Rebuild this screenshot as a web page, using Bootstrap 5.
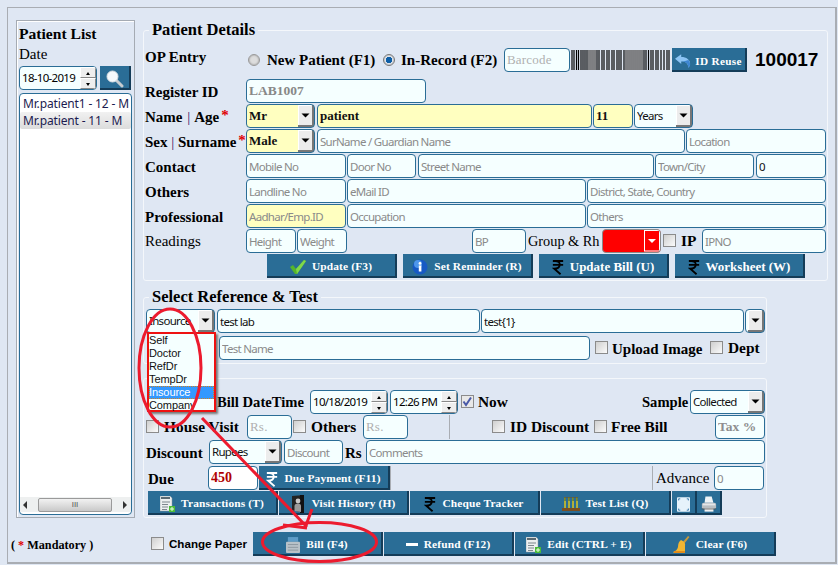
<!DOCTYPE html>
<html lang="en"><head><meta charset="utf-8"><title>Patient Details</title>
<link href="https://cdn.jsdelivr.net/npm/bootstrap@5.3.0/dist/css/bootstrap.min.css" rel="stylesheet">
<style>
html,body{margin:0;height:565px;overflow:hidden;background:#dfe7f3}
body{font-family:"Liberation Serif",serif;color:#000;position:relative}
.frame{margin:7px 0 0 7px;width:830px;height:557px;border:1px solid #a9adb3;border-right-width:2px;border-bottom-width:2px}
.leftpanel{width:119px;height:498px;margin:12px 0 0 8px;border:1px solid #a5abb3;box-shadow:inset 1px 1px 0 #fff;padding:3px 2px 2px}
.ptitle{font-weight:700;font-size:15.6px;line-height:20px}
.ptext{font-size:15px;line-height:20px;margin-bottom:2px}
.rightcol{margin:13px 0 0 8px}
.fset{border:1px solid #f4f7fb;border-radius:3px;padding:0 1px}
.fset legend{float:none;width:auto;font-size:16.5px;line-height:18px;font-weight:700;padding:0 3px;margin:0 0 0 4px}
.fs1{width:685px;padding-top:9px;padding-bottom:2px}
.fs2{width:624px;margin-top:7px;padding-top:3px;padding-bottom:3px}
.fs3{width:624px;margin-top:14px;padding-top:11px;padding-bottom:2px}
.frow{display:flex;align-items:flex-start;height:25px;white-space:nowrap}
.frow.oprow{height:24px;margin-bottom:7px;align-items:center}
.frow.auto{height:24px}
.lb{font-size:15px;line-height:26px;font-weight:700;flex:none}
.lb.lh24{line-height:24px;font-size:15.4px}
.lb.reg{font-weight:400;line-height:24px}
.lb.sm{font-size:14.6px;line-height:24px}
.lb.narrow{font-size:14.3px}
.lbl{width:101px}
.star{color:#e00000;font-size:15px;position:relative;top:-2px;font-weight:700;margin-left:2px}
.pipe{color:#3a1060;font-weight:400}
.pipe.wide{margin:0 1px}
.opl{line-height:24px;margin-bottom:6px}
.fc.form-control,.fc.form-select{height:24px;min-height:0;flex:none;padding:0 2px;font-family:"Noto Sans",sans-serif;font-size:11.5px;letter-spacing:-.7px;line-height:22px;color:#111;background-color:#f5ffff;border:1px solid #2a6d96;border-radius:4px;box-shadow:none}
.fc.form-control::placeholder{color:#8a8a8a;opacity:1}
.fc.form-select{padding-right:16px;background-image:url("data:image/svg+xml,%3Csvg xmlns='http://www.w3.org/2000/svg' width='16' height='22'%3E%3Crect width='16' height='22' fill='%23ececec'/%3E%3Cpath d='M0 .5H16M.5 0V22' stroke='%23fff'/%3E%3Cpath d='M15 0V22M0 21H16' stroke='%23777' stroke-width='2'/%3E%3Cpath d='M3.5 8.5H11.5L7.5 12.5Z' fill='%23000'/%3E%3C/svg%3E");background-position:right 0 center;background-size:16px 22px;background-repeat:no-repeat}
.fc.yel{background-color:#ffffc0}
.fc.bs{font-family:"Liberation Serif",serif;font-weight:700;font-size:13px;letter-spacing:0}
.fc.gr{color:#888}
.fc.serifph{font-family:"Liberation Serif",serif;font-size:13px;letter-spacing:.2px}
.fc.serifph::placeholder{color:#b0b0b0}
.fc.serifb::placeholder{font-weight:700;color:#8e8e8e}
.fc.serifb{font-family:"Liberation Serif",serif;font-size:13.5px;letter-spacing:0}
.fc.boldv{font-weight:700}
.fc.red{color:#b00000;font-family:"Liberation Serif",serif;font-weight:700;font-size:14px;letter-spacing:0;background-color:#fff}
.fc.redsel{background-color:#ff0000;border-color:#8a8a8a;background-image:url("data:image/svg+xml,%3Csvg xmlns='http://www.w3.org/2000/svg' width='16' height='22'%3E%3Crect width='16' height='22' fill='%23f00'/%3E%3Cpath d='M.5 .5H15.5V21' stroke='%23fff' fill='none'/%3E%3Cpath d='M.5 0V21M0 21H16' stroke='%23fff'/%3E%3Cpath d='M4 9H12L8 13Z' fill='%23fff'/%3E%3C/svg%3E")}
.spinbox{display:flex;height:24px;flex:none;background:#f5ffff;border:1px solid #2a6d96;border-radius:4px;overflow:hidden}
.spinbox input{flex:1;min-width:0;border:0;background:transparent;padding:0 2px;font-family:"Noto Sans",sans-serif;font-size:11.5px;letter-spacing:-.7px;outline:0}
.spins{width:16px;flex:none;display:flex;flex-direction:column}
.spins span{flex:1;background:#eeeeee;border:1px solid;border-color:#fff #888 #888 #fff;position:relative}
.spins span::after{content:"";position:absolute;left:5px;top:4px;border:2px solid transparent;border-top:0;border-bottom:3px solid #000}
.spins span+span::after{border-bottom:0;border-top:3px solid #000}
.form-check-input.ck{width:13px;height:13px;margin:5px 0 0;flex:none;border-radius:0;border:1px solid #8b8b8b;background-color:#e4e4e4;background-image:linear-gradient(135deg,#cfcfcf,#fbfbfb);box-shadow:none}
.form-check-input.ck.on{background-image:url("data:image/svg+xml,%3Csvg xmlns='http://www.w3.org/2000/svg' viewBox='0 0 13 13'%3E%3Cpath d='M2.5 6.5L5 10L10 2.5' stroke='%234a5aa8' stroke-width='2' fill='none'/%3E%3C/svg%3E");background-color:#e8e8e8;background-size:13px}
.form-check-input.rd{width:12px;height:12px;margin:0;flex:none;border:1px solid #999;background-color:#ddd;background-image:none;box-shadow:inset 0 0 2px #888}
.form-check-input.rd.on{background-color:#e8eef5;background-image:radial-gradient(circle,#0d5fa8 0 3px,#e8eef5 3.5px);border-color:#777}
.bbtn.btn{flex:none;display:flex;align-items:center;justify-content:center;gap:6px;height:24px;width:130px;padding:4px 0 0;background:#2a6d96;border:0;border-right:2px solid #143c58;border-bottom:2px solid #143c58;border-radius:0;color:#fff;font-family:"Liberation Serif",serif;font-weight:700;font-size:11.4px;letter-spacing:.15px;white-space:nowrap}
.bbtn.big{font-size:13px;letter-spacing:0}
.bbtn.ic{width:25px}
.bbtn.wd131{width:131px}
.bbtn.wd75{width:75px;gap:4px;font-size:11.2px;letter-spacing:.35px}
.bbtn.wd31{width:31px}
.bid{font-family:"Liberation Sans",sans-serif;font-weight:700;font-size:19px;line-height:24px}
.sepv{width:1px;height:24px;flex:none;background:#a9adb3}
.plist{flex:1;height:422px;background:#fff;border:1px solid #2a6d96;border-radius:4px;margin-top:3px;display:flex;flex-direction:column;overflow:hidden}
.pitems{flex:1;padding-top:1px}
.pitems .list-group-item{background:transparent;border:0;border-radius:0;padding:0 0 0 3px;height:17px;font-family:"Noto Sans",sans-serif;font-size:12px;letter-spacing:-.15px;line-height:17px;color:#1c1c50;white-space:nowrap}
.pitems .list-group-item.sel{background:linear-gradient(#f1f1f1,#dcdcdc);border-radius:2px}
.hscroll{height:15px;margin-bottom:2px;display:flex;align-items:center;background:#eef0f0;padding:0 3px}
.hscroll .tri{width:0;height:0;border:4px solid transparent;flex:none}
.tl{border-right:4px solid #333!important;border-left:0!important}
.tr{border-left:4px solid #333!important;border-right:0!important}
.thumb{width:74px;height:14px;margin:0 11px 0 11px;flex:none;background:linear-gradient(#f2f2f2,#c9c9c9);border:1px solid #9a9a9a;border-radius:2px;font-size:8px;line-height:11px;text-align:center;color:#555;font-family:"Liberation Sans",sans-serif}
.relw{position:relative;flex:none}
.dropdown-menu.ddm{display:block;position:absolute;top:23px;left:1px;min-width:0;width:69px;height:80px;padding:0;margin:0;background:#f5ffff;border:2px solid #ee1111;border-radius:0;box-shadow:2px 2px 2px #777;z-index:5}
.ddm .dropdown-item{padding:0;height:13px;font-family:"Liberation Sans",sans-serif;font-size:11px;letter-spacing:-.1px;line-height:13px;color:#111;overflow:hidden}
.ddm .dropdown-item.active{background:#3399ff;color:#fff;outline:1px dotted #d08020;outline-offset:-1px}
.mand{font-size:12.2px;font-weight:700;line-height:26px;width:140px;flex:none}
.mand b{color:#e00000}
.chg{font-family:"Liberation Sans",sans-serif;font-weight:700;font-size:11.6px;line-height:24px}
.botrow{margin-top:14px}
.overlay{position:absolute;left:0;top:0;width:838px;height:565px;pointer-events:none;z-index:20}
.wd13{width:13px}.wd20{width:20px}.wd21{width:21px}.wd40{width:40px}.wd45{width:45px}.wd48{width:48px}.wd50{width:50px}.wd52{width:52px}.wd54{width:54px}.wd58{width:58px}.wd59{width:59px}.wd60{width:60px}.wd63{width:63px}.wd66{width:66px}.wd68{width:68px}.wd69{width:69px}.wd70{width:70px}.wd73{width:73px}.wd74{width:74px}.wd75{width:75px}.wd78{width:78px}.wd83{width:83px}.wd84{width:84px}.wd93{width:93px}.wd98{width:98px}.wd99{width:99px}.wd100{width:100px}.wd104{width:104px}.wd116{width:116px}.wd103{width:103px}.wd124{width:124px}.wd140{width:140px}.wd164{width:164px}.wd180{width:180px}.wd236{width:236px}.wd239{width:239px}.wd263{width:263px}.wd275{width:275px}.wd368{width:368px}.wd371{width:371px}.wd399{width:399px}
.ml1{margin-left:1px!important}.ml2{margin-left:2px!important}.ml3{margin-left:3px!important}.ml4{margin-left:4px!important}.ml5{margin-left:5px!important}.ml6{margin-left:6px!important}.ml7{margin-left:7px!important}.ml8{margin-left:8px!important}.ml41{margin-left:41px!important}.ml42{margin-left:42px!important}.ml72{margin-left:72px!important}.ml74{margin-left:74px!important}.ml122{margin-left:122px!important}.ml125{margin-left:125px!important}.ml261{margin-left:261px!important}
.mt1r{margin-top:1px}.mt3r{margin-top:3px}
</style></head>
<body>
<svg width="0" height="0" class="position-absolute">
<defs>
<symbol id="rup" viewBox="0 0 14 18"><path d="M1 2H13M1 6.5H13M4 2C11 2 11 11 2.5 11L10 17.5" fill="none" stroke="currentColor" stroke-width="2.1"/></symbol>
<symbol id="chk" viewBox="0 0 16 14"><path d="M0 7L3 5L6 9L14 0L16 1L7 14H5Z" fill="#55b52a"/><path d="M6 9L14 0L16 1L7 14Z" fill="#7fd84a"/></symbol>
<symbol id="inf" viewBox="0 0 16 16"><circle cx="8" cy="8" r="7.5" fill="#1659c4"/><circle cx="6" cy="5" r="4" fill="#4d96ec"/><rect x="6.8" y="6.5" width="2.6" height="6" fill="#fff"/><circle cx="8" cy="4.4" r="1.4" fill="#fff"/></symbol>
<symbol id="doc" viewBox="0 0 15 17"><path d="M0 0H10L12 2V15H0Z" fill="#eceff0" stroke="#8f9aa0" stroke-width=".5"/><path d="M1 1H10V3H1Z" fill="#5b6a72"/><path d="M2 6H10M2 8.5H8M2 11H8M2 13.5H7" stroke="#7d878d"/><rect x="9" y="10" width="6" height="6" fill="#4cbb3a"/><path d="M12 11V15M10 13H14" stroke="#e7ffe0"/></symbol>
<symbol id="door" viewBox="0 0 15 18"><path d="M1 1L13 0V18L1 15Z" fill="#222"/><path d="M9 0H13V18H9Z" fill="#111"/><circle cx="7" cy="6" r="2.4" fill="#c8c8c8"/><path d="M3.5 16V11Q3.5 8.5 7 8.5Q10 8.5 10 11V17Z" fill="#9a9a9a"/></symbol>
<symbol id="tube" viewBox="0 0 18 14"><path d="M2 0H3.6V11H2ZM6 0H7.6V11H6ZM10 0H11.6V11H10ZM14 0H15.6V11H14Z" fill="#7f8a26"/><path d="M2 0H16" stroke="#6b4a2a"/><path d="M2.5 4H3.6V11H2.5ZM6.5 4H7.6V11H6.5ZM10.5 4H11.6V11H10.5ZM14.5 4H15.6V11H14.5Z" fill="#e6d43c"/><rect y="11" width="18" height="3" fill="#7a4f22"/></symbol>
<symbol id="full" viewBox="0 0 16 18"><rect width="16" height="18" rx="1" fill="#e6f2fb"/><path d="M2 2H4M2 2V4M14 2H12M14 2V4M2 16H4M2 16V14M14 16H12M14 16V14" stroke="#3f7fb0" stroke-width="1.2"/></symbol>
<symbol id="prn" viewBox="0 0 18 18"><path d="M5 0H12L14 7H4Z" fill="#eef3f6"/><rect x="1" y="7" width="16" height="7" rx="2" fill="#b9bec2"/><rect x="2" y="8" width="14" height="2" fill="#e4e6e8"/><rect x="4" y="13" width="10" height="4" fill="#f2f2f2"/><path d="M1 14H17" stroke="#555"/></symbol>
<symbol id="bill" viewBox="0 0 15 17"><path d="M2 0H13V5H2Z" fill="#5d9cc8"/><rect y="5" width="15" height="12" rx="1" fill="#b8c2c8"/><path d="M2 8H13M2 11H13M2 14H13" stroke="#8b979e"/></symbol>
<symbol id="brm" viewBox="0 0 17 18"><path d="M15 0L16.5 1L11 8L9 7Z" fill="#c99a3a"/><path d="M8 4Q13 6 12 10L12 17H3Q0 17 0 16Q4 15 5 11Q5 6 8 4Z" fill="#f2b632"/><path d="M1 16H12" stroke="#e08c1c" stroke-width="2"/></symbol>
<symbol id="back" viewBox="0 0 18 15"><path d="M0 5L7 0V3C13 3 17 6 17 11C17 13 16 14 15 15C15 10 12 8 7 8V11Z" fill="#8cc4f4"/><path d="M7 8C12 8 15 10 15 15C16 14 17 13 17 11C17 9 16 7.5 15 6.5C13 7.5 10 8 7 8Z" fill="#3d86d2"/></symbol>
<symbol id="mag" viewBox="0 0 18 18"><path d="M9.5 9.5L16 16" stroke="#c6ccd0" stroke-width="3" stroke-linecap="round"/><circle cx="6.5" cy="6.5" r="5.5" fill="#f4f9fc" stroke="#d8dee2"/></symbol>
</defs>
</svg>

<div class="frame">
<div class="d-flex align-items-start">
  <div class="leftpanel d-flex flex-column">
    <div class="ptitle">Patient List</div>
    <div class="ptext">Date</div>
    <div class="d-flex">
      <div class="spinbox wd78"><input type="text" value="18-10-2019" aria-label="Date"><div class="spins"><span></span><span></span></div></div>
      <button class="bbtn btn ic wd31 ml3" type="button" aria-label="Search"><svg width="18" height="18"><use href="#mag"/></svg></button>
    </div>
    <div class="plist">
      <ul class="list-group pitems">
        <li class="list-group-item">Mr.patient1 - 12 - M</li>
        <li class="list-group-item sel">Mr.patient - 11 - M</li>
      </ul>
      <div class="hscroll"><span class="tri tl"></span><div class="thumb">III</div><span class="tri tr"></span></div>
    </div>
  </div>

  <div class="rightcol">
    <fieldset class="fset fs1">
      <legend>Patient Details</legend>
      <div class="frow oprow">
        <div class="lb lbl opl">OP Entry</div>
        <input class="form-check-input rd ml2" type="radio" name="op" aria-label="New">
        <div class="lb ml7 wd116">New Patient (F1)</div>
        <input class="form-check-input rd on" type="radio" name="op" aria-label="In">
        <div class="lb ml6 wd103">In-Record (F2)</div>
        <input class="fc form-control serifph wd66" placeholder="Barcode">
        <svg class="ml1 flex-none" width="99" height="20" aria-hidden="true"><path d="M1 0v20M3 0v20M5.5 0v20M7.5 0v20M10 0v20M12 0v20M14 0v20M16 0v20M26 0v20M28 0v20M31 0v20M33 0v20M36 0v20M38 0v20M41 0v20M43 0v20M46 0v20M48 0v20M50 0v20M53 0v20M73 0v20M75 0v20M77.5 0v20M80 0v20M82 0v20M85 0v20M87 0v20M90 0v20M93 0v20M96 0v20M98 0v20" stroke="#000" stroke-width="1.2"/><path d="M18 0v20M20 0v20M22 0v20M24 0v20M55 0v20M57 0v20M59 0v20M61 0v20M63 0v20M65 0v20M67 0v20M69 0v20M71 0v20" stroke="#666" stroke-width="1.6"/></svg>
        <button class="bbtn btn wd75 ml2" type="button"><svg width="16" height="14"><use href="#back"/></svg>ID Reuse</button>
        <div class="bid ml8">100017</div>
      </div>
      <div class="frow"><div class="lb lbl">Register ID</div><input class="fc form-control serifb boldv gr wd180" value="LAB1007"></div>
      <div class="frow"><div class="lb lbl">Name <span class="pipe wide">|</span> Age<span class="star">*</span></div>
        <select class="fc form-select yel bs wd69"><option>Mr</option></select>
        <input class="fc form-control yel bs wd275 ml2" value="patient">
        <input class="fc form-control yel bs wd40 ml1" value="11">
        <select class="fc form-select wd59 ml1"><option>Years</option></select></div>
      <div class="frow"><div class="lb lbl">Sex <span class="pipe">|</span> Surname<span class="star">*</span></div>
        <select class="fc form-select yel bs wd69"><option>Male</option></select>
        <input class="fc form-control wd368 ml2" placeholder="SurName / Guardian Name">
        <input class="fc form-control wd140 ml1" placeholder="Location"></div>
      <div class="frow"><div class="lb lbl">Contact</div>
        <input class="fc form-control wd100" placeholder="Mobile No">
        <input class="fc form-control wd69 ml1" placeholder="Door No">
        <input class="fc form-control wd236 ml2" placeholder="Street Name">
        <input class="fc form-control wd99 ml1" placeholder="Town/City">
        <input class="fc form-control wd70 ml2" value="0"></div>
      <div class="frow"><div class="lb lbl">Others</div>
        <input class="fc form-control wd100" placeholder="Landline No">
        <input class="fc form-control wd239 ml1" placeholder="eMail ID">
        <input class="fc form-control wd239 ml1" placeholder="District, State, Country"></div>
      <div class="frow"><div class="lb lbl">Professional</div>
        <input class="fc form-control yel wd100" placeholder="Aadhar/Emp.ID">
        <input class="fc form-control wd239 ml1" placeholder="Occupation">
        <input class="fc form-control wd239 ml1" placeholder="Others"></div>
      <div class="frow"><div class="lb reg lbl">Readings</div>
        <input class="fc form-control wd50" placeholder="Height">
        <input class="fc form-control wd50 ml1" placeholder="Weight">
        <input class="fc form-control wd54 ml125" placeholder="BP">
        <div class="lb reg narrow ml2 wd74">Group &amp; Rh</div>
        <select class="fc form-select redsel wd59" aria-label="Group"><option></option></select>
        <input class="form-check-input ck ml2" type="checkbox" aria-label="IP">
        <div class="lb lh24 ml5 wd21">IP</div>
        <input class="fc form-control wd124" placeholder="IPNO"></div>
      <div class="frow auto">
        <button class="bbtn btn ml122" type="button"><svg width="16" height="14"><use href="#chk"/></svg>Update (F3)</button>
        <button class="bbtn btn ml6" type="button"><svg width="16" height="16"><use href="#inf"/></svg>Set Reminder (R)</button>
        <button class="bbtn btn big ml6" type="button"><svg class="text-black" width="12" height="16"><use href="#rup"/></svg>Update Bill (U)</button>
        <button class="bbtn btn big ml6" type="button"><svg class="text-black" width="12" height="16"><use href="#rup"/></svg>Worksheet (W)</button>
      </div>
    </fieldset>

    <fieldset class="fset fs2">
      <legend>Select Reference &amp; Test</legend>
      <div class="frow auto">
        <div class="relw wd69 ml1">
          <select class="fc form-select wd69"><option>Insource</option></select>
          <ul class="dropdown-menu ddm">
            <li><a class="dropdown-item" href="#">Self</a></li>
            <li><a class="dropdown-item" href="#">Doctor</a></li>
            <li><a class="dropdown-item" href="#">RefDr</a></li>
            <li><a class="dropdown-item" href="#">TempDr</a></li>
            <li><a class="dropdown-item active" href="#">Insource</a></li>
            <li><a class="dropdown-item" href="#">Company</a></li>
          </ul>
        </div>
        <input class="fc form-control wd263 ml2" value="test lab">
        <input class="fc form-control wd263 ml1" value="test{1}">
        <select class="fc form-select wd20 ml1" aria-label="Test"><option></option></select>
      </div>
      <div class="frow auto mt3r">
        <input class="fc form-control wd371 ml74" placeholder="Test Name">
        <input class="form-check-input ck ml5" type="checkbox" aria-label="Upload">
        <div class="lb ml4 wd98">Upload Image</div>
        <input class="form-check-input ck" type="checkbox" aria-label="Dept">
        <div class="lb lh24 ml5">Dept</div>
      </div>
    </fieldset>

    <fieldset class="fset fs3">
      <div class="frow">
        <div class="lb sm ml72 wd93">Bill DateTime</div>
        <div class="spinbox wd78"><input type="text" value="10/18/2019" aria-label="Bill date"><div class="spins"><span></span><span></span></div></div>
        <div class="spinbox wd68 ml2"><input type="text" value="12:26 PM" aria-label="Bill time"><div class="spins"><span></span><span></span></div></div>
        <input class="form-check-input ck on ml3" type="checkbox" checked aria-label="Now">
        <div class="lb lh24 ml4 wd164">Now</div>
        <div class="lb sm wd48">Sample</div>
        <select class="fc form-select wd75"><option>Collected</option></select>
      </div>
      <div class="frow">
        <input class="form-check-input ck ml1" type="checkbox" aria-label="House Visit">
        <div class="lb lh24 ml5 wd83">House Visit</div>
        <input class="fc form-control serifph wd45" placeholder="Rs.">
        <input class="form-check-input ck ml1" type="checkbox" aria-label="Others">
        <div class="lb lh24 ml5 wd52">Others</div>
        <input class="fc form-control serifph wd45" placeholder="Rs.">
        <div class="sepv ml41"></div>
        <input class="form-check-input ck ml42" type="checkbox" aria-label="ID Discount">
        <div class="lb lh24 ml5 wd84">ID Discount</div>
        <input class="form-check-input ck" type="checkbox" aria-label="Free Bill">
        <div class="lb lh24 ml4 wd104">Free Bill</div>
        <input class="fc form-control serifb wd50" placeholder="Tax %">
      </div>
      <div class="frow">
        <div class="lb ml1 wd63">Discount</div>
        <select class="fc form-select wd73"><option>Rupees</option></select>
        <input class="fc form-control wd59 ml2" placeholder="Discount">
        <div class="lb ml2 wd21">Rs</div>
        <input class="fc form-control wd399" placeholder="Comments">
      </div>
      <div class="frow mt1r">
        <div class="lb ml3 wd60">Due</div>
        <input class="fc form-control red wd50" value="450">
        <button class="bbtn btn wd131 ml1" type="button"><svg class="text-white" width="12" height="16"><use href="#rup"/></svg>Due Payment (F11)</button>
        <div class="sepv"></div>
        <div class="sepv ml261"></div>
        <div class="lb reg ml3 wd58">Advance</div>
        <input class="fc form-control wd50" placeholder="0">
      </div>
      <div class="frow auto">
        <button class="bbtn btn ml3" type="button"><svg width="15" height="17"><use href="#doc"/></svg>Transactions (T)</button>
        <button class="bbtn btn ml1" type="button"><svg width="15" height="18"><use href="#door"/></svg>Visit History (H)</button>
        <button class="bbtn btn ml1" type="button"><svg class="text-black" width="12" height="16"><use href="#rup"/></svg>Cheque Tracker</button>
        <button class="bbtn btn ml1" type="button"><svg width="18" height="14"><use href="#tube"/></svg>Test List (Q)</button>
        <button class="bbtn btn ic ml1" type="button" aria-label="Full"><svg width="13" height="15"><use href="#full"/></svg></button>
        <button class="bbtn btn ic" type="button" aria-label="Print"><svg width="16" height="17"><use href="#prn"/></svg></button>
      </div>
    </fieldset>
  </div>
</div>
<div class="frow auto botrow">
  <div class="mand ml3">( <b>*</b> Mandatory )</div>
  <input class="form-check-input ck" type="checkbox" aria-label="Change Paper">
  <div class="chg ml5 wd84">Change Paper</div>
  <button class="bbtn btn" type="button"><svg width="14" height="16"><use href="#bill"/></svg>Bill (F4)</button>
  <button class="bbtn btn ml1" type="button"><svg width="12" height="4"><rect width="12" height="3" fill="#fff"/></svg>Refund (F12)</button>
  <button class="bbtn btn ml1" type="button"><svg width="15" height="17"><use href="#doc"/></svg>Edit (CTRL + E)</button>
  <button class="bbtn btn ml1" type="button"><svg width="17" height="18"><use href="#brm"/></svg>Clear (F6)</button>
</div>
</div>

<svg class="overlay" viewBox="0 0 838 565" aria-hidden="true">
  <g fill="none" stroke="#ec1b2e" stroke-width="3">
    <ellipse cx="170" cy="368" rx="31" ry="59"/>
    <ellipse cx="319.5" cy="542" rx="57" ry="19.5"/>
    <path d="M202 418L307 527M312 509L305 528M283 525L307 528"/>
  </g>
</svg>
</body></html>
